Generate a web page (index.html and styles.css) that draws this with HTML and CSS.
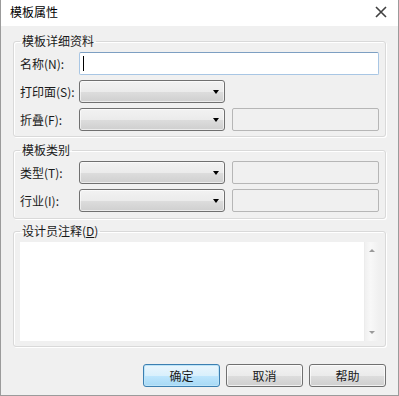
FILE: index.html
```html
<!DOCTYPE html>
<html lang="zh-CN">
<head>
    <meta charset="UTF-8">
    <title>模板属性</title>
    <link rel="stylesheet" href="styles.css">
</head>
<body>
    <div class="dialog">
        <div class="titlebar">
            <span class="title">模板属性</span>
            <svg class="close" width="12" height="12" viewBox="0 0 12 12">
                <path d="M1 1 L11 11 M11 1 L1 11" stroke="#404040" stroke-width="1.6" fill="none"/>
            </svg>
        </div>

        <div class="content">
            <fieldset class="group">
                <legend>模板详细资料</legend>
                <div class="form-grid">
                    <label>名称(N):</label>
                    <div class="textbox focused wide"><span class="caret"></span></div>

                    <label>打印面(S):</label>
                    <div class="combo"><span class="arrow"></span></div>
                    <div></div>

                    <label>折叠(F):</label>
                    <div class="combo"><span class="arrow"></span></div>
                    <div class="textbox disabled"></div>
                </div>
            </fieldset>

            <fieldset class="group group-types">
                <legend>模板类别</legend>
                <div class="form-grid">
                    <label>类型(T):</label>
                    <div class="combo"><span class="arrow"></span></div>
                    <div class="textbox disabled"></div>

                    <label>行业(I):</label>
                    <div class="combo"><span class="arrow"></span></div>
                    <div class="textbox disabled"></div>
                </div>
            </fieldset>

            <fieldset class="group group-notes">
                <legend>设计员注释(<u>D</u>)</legend>
                <div class="notes">
                    <div class="notes-text"></div>
                    <div class="scrollbar">
                        <span class="scroll-up"></span>
                        <span class="scroll-down"></span>
                    </div>
                </div>
            </fieldset>

            <div class="buttons">
                <button class="btn btn-default">确定</button>
                <button class="btn">取消</button>
                <button class="btn">帮助</button>
            </div>
        </div>
    </div>
</body>
</html>
```

FILE: styles.css
```css
* {
    margin: 0;
    padding: 0;
    box-sizing: border-box;
}

body {
    font-family: "Noto Sans CJK SC", "Liberation Sans", sans-serif;
    font-size: 12px;
    color: #1a1a1a;
    background: #f0f0f0;
}

.dialog {
    width: 399px;
    height: 396px;
    background: #f0f0f0;
    border: 1px solid #9b9b9b;
    border-top: none;
    display: flex;
    flex-direction: column;
}

.titlebar {
    height: 26px;
    background: #fff;
    display: flex;
    align-items: center;
    justify-content: space-between;
    padding: 0 11px 2px 9px;
}

.title {
    font-size: 12px;
    line-height: 16px;
    color: #000;
}

.content {
    padding: 7px 12px 0 12px;
    display: flex;
    flex-direction: column;
    gap: 5px;
}

.group {
    border: 1px solid #d9d9d9;
    border-radius: 3px;
    box-shadow: inset 1px 1px 0 #fff, 1px 1px 0 #fff;
    padding: 3px 6px 5px 6px;
}

.group legend {
    padding: 0 2px;
    line-height: 16px;
    color: #1a1a1a;
}

.group-types {
    padding-bottom: 6px;
}

.group-notes {
    margin-top: -1px;
}

.form-grid {
    display: grid;
    grid-template-columns: 59px 146px 1fr;
    grid-auto-rows: 23px;
    row-gap: 5px;
    align-items: center;
}

.form-grid label {
    line-height: 16px;
    white-space: nowrap;
}

.textbox {
    height: 23px;
    border: 1px solid #b5b8bd;
    border-radius: 2px;
    position: relative;
}

.textbox.wide {
    grid-column: 2 / 4;
}

.textbox.focused {
    background: #fff;
    border-color: #a8c6e4;
    border-top-color: #7d9fc2;
}

.textbox.disabled {
    margin-left: 7px;
    background: #f0f0f0;
    border-color: #b6b6b6;
}

.caret {
    position: absolute;
    left: 3px;
    top: 3px;
    width: 1px;
    height: 15px;
    background: #000;
}

.combo {
    height: 23px;
    border: 1px solid #707070;
    border-radius: 3px;
    background: linear-gradient(#f2f2f2 0%, #ebebeb 50%, #dddddd 51%, #cfcfcf 100%);
    box-shadow: inset 0 0 0 1px rgba(255, 255, 255, 0.6);
    position: relative;
}

.arrow {
    position: absolute;
    right: 5px;
    top: 9px;
    border-left: 3.5px solid transparent;
    border-right: 3.5px solid transparent;
    border-top: 4px solid #000;
}

.notes {
    height: 99px;
    display: flex;
    background: #fff;
}

.notes-text {
    flex: 1;
}

.scrollbar {
    width: 15px;
    background: linear-gradient(90deg, #f0f0f0, #f8f8f8 40%, #f0f0f0);
    border-left: 1px solid #ececec;
    display: flex;
    flex-direction: column;
    justify-content: space-between;
    align-items: center;
    padding: 7px 0 7px;
}

.scroll-up {
    border-left: 3px solid transparent;
    border-right: 3px solid transparent;
    border-bottom: 3px solid #9a9a9a;
}

.scroll-down {
    border-left: 3px solid transparent;
    border-right: 3px solid transparent;
    border-top: 3px solid #9a9a9a;
}

.buttons {
    margin-top: 12px;
    display: flex;
    justify-content: flex-end;
    gap: 6px;
}

.btn {
    width: 77px;
    height: 23px;
    font-family: inherit;
    font-size: 12px;
    color: #1a1a1a;
    border: 1px solid #707070;
    border-radius: 3px;
    background: linear-gradient(#f2f2f2 0%, #ebebeb 50%, #dddddd 51%, #cfcfcf 100%);
    box-shadow: inset 0 0 0 1px rgba(255, 255, 255, 0.7);
}

.btn-default {
    border-color: #3c7fb1;
    background: linear-gradient(#eaf6fd 0%, #d9f0fc 50%, #bee6fd 51%, #a7d9f5 100%);
    box-shadow: inset 0 0 0 1px #bde4f8;
}
```
